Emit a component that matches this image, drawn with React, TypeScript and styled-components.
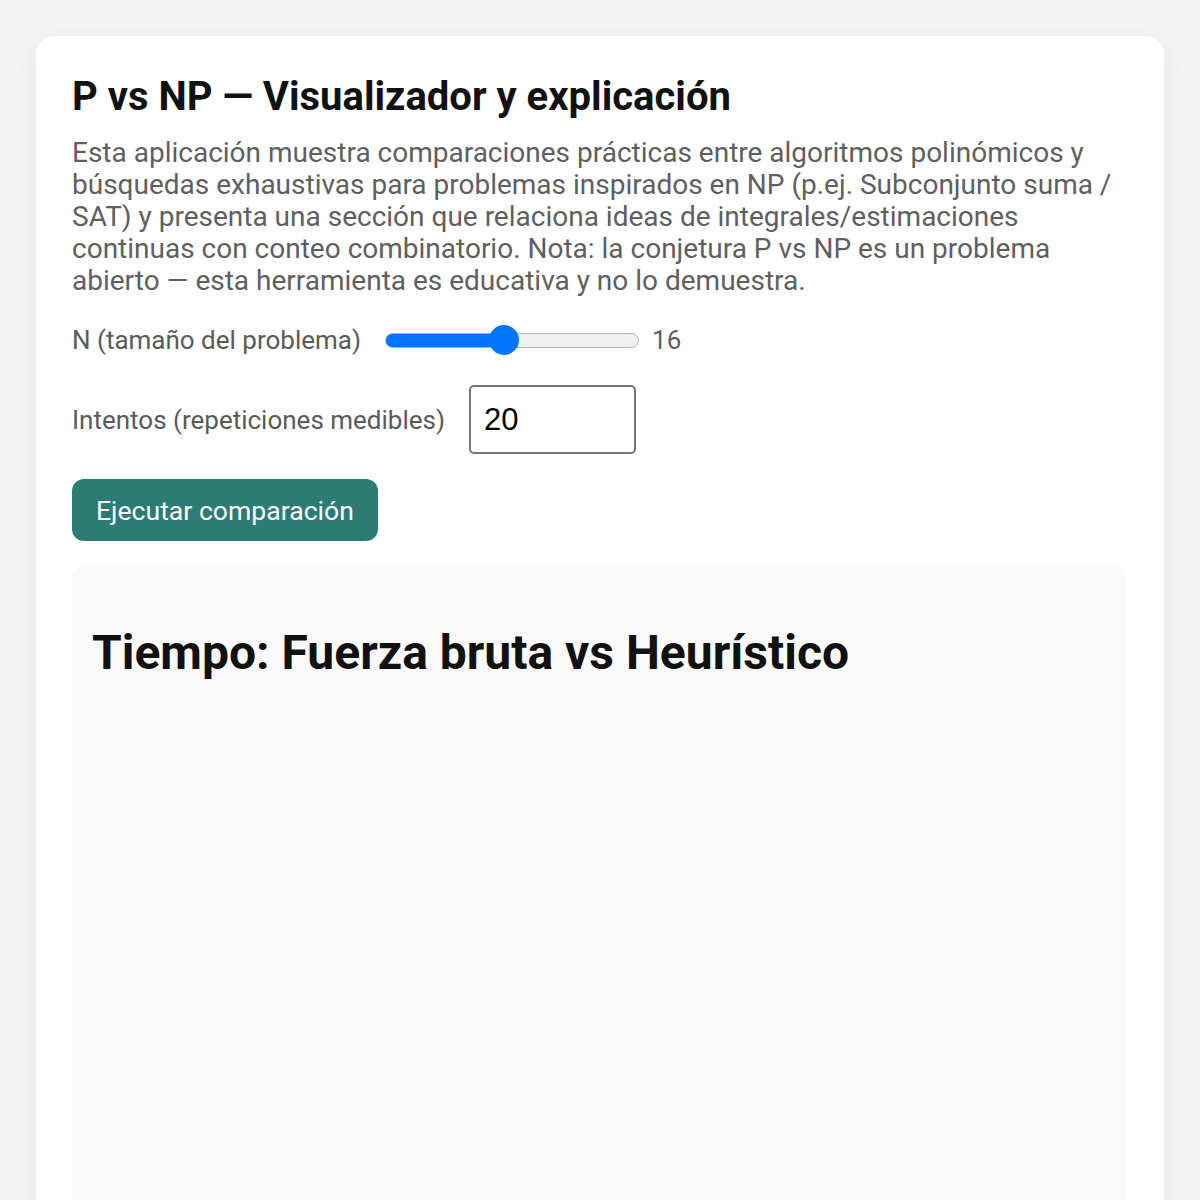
import React, { useState } from "react";
import styled, { createGlobalStyle } from "styled-components";

const Global = createGlobalStyle`
  html, body { margin: 0; padding: 0; background: #f4f4f4; }
  body { font-family: Roboto, "Noto Sans", "Liberation Sans", sans-serif; }
  * { box-sizing: border-box; }
`;

const Page = styled.div`
  padding: 36px 36px 0;
  min-height: 1200px;
`;

const Card = styled.main`
  background: #ffffff;
  border-radius: 18px;
  box-shadow: 0 4px 24px rgba(0, 0, 0, 0.06);
  padding: 37px 38px 40px 36px;
`;

const Title = styled.h1`
  margin: 0 0 17px;
  font-size: 40px;
  font-weight: 700;
  color: #111;
  line-height: 47px;
`;

const Lead = styled.p`
  margin: 0 0 28px;
  font-size: 28px;
  line-height: 32px;
  color: #5f5f5f;
`;

const Row = styled.div<{ $mb: number }>`
  display: flex;
  align-items: center;
  gap: 24px;
  margin-bottom: ${(p) => p.$mb}px;
`;

const Label = styled.label`
  font-size: 26px;
  line-height: 30px;
  color: #5a5a5a;
`;

const Value = styled.span`
  font-size: 26px;
  color: #5f5f5f;
  margin-left: -11px;
`;

const Range = styled.input`
  -webkit-appearance: none;
  appearance: none;
  width: 254px;
  height: 15px;
  margin: 0;
  border-radius: 8px;
  border: 1px solid #b4b4b4;
  outline: none;
  &::-webkit-slider-thumb {
    -webkit-appearance: none;
    width: 30px;
    height: 30px;
    border-radius: 50%;
    background: #0075ff;
    border: none;
    cursor: pointer;
  }
`;

const NumberBox = styled.input`
  width: 167px;
  height: 69px;
  border: 2px solid #767676;
  border-radius: 5px;
  padding: 0 13px;
  font-family: "Liberation Sans", Arial, sans-serif;
  font-size: 31px;
  color: #000;
  background: #fff;
  outline: none;
  &::-webkit-inner-spin-button { -webkit-appearance: none; }
`;

const RunButton = styled.button`
  height: 62px;
  padding: 0 24px;
  border: none;
  border-radius: 12px;
  background: #2c7b74;
  color: #fff;
  font-family: Roboto, "Noto Sans", sans-serif;
  font-size: 26.6px;
  cursor: pointer;
`;

const ChartPanel = styled.section`
  background: #fafafa;
  border-radius: 10px;
  box-shadow: 0 0 2px rgba(0, 0, 0, 0.04);
  padding: 20px 20px;
  height: 720px;
`;

const ChartTitle = styled.h2`
  margin: 38px 0 0;
  font-size: 48px;
  font-weight: 700;
  color: #111;
  line-height: 56px;
`;

export default function App() {
  const [n, setN] = useState(16);
  const [tries, setTries] = useState("20");
  const min = 4;
  const max = 30;
  const pct = ((n - min) / (max - min)) * 100;
  return (
    <>
      <Global />
      <Page>
        <Card>
          <Title>P vs NP — Visualizador y explicación</Title>
          <Lead>
            Esta aplicación muestra comparaciones prácticas entre algoritmos polinómicos y
            búsquedas exhaustivas para problemas inspirados en NP (p.ej. Subconjunto suma /
            SAT) y presenta una sección que relaciona ideas de integrales/estimaciones
            continuas con conteo combinatorio. Nota: la conjetura P vs NP es un problema
            abierto — esta herramienta es educativa y no lo demuestra.
          </Lead>
          <Row $mb={30}>
            <Label htmlFor="n">N (tamaño del problema)</Label>
            <Range
              id="n"
              type="range"
              min={min}
              max={max}
              value={n}
              onChange={(e) => setN(Number(e.target.value))}
              style={{
                background: `linear-gradient(to right, #0075ff 0%, #0075ff ${pct}%, #efefef ${pct}%, #efefef 100%)`,
              }}
            />
            <Value>{n}</Value>
          </Row>
          <Row $mb={25}>
            <Label htmlFor="t">Intentos (repeticiones medibles)</Label>
            <NumberBox id="t" type="number" value={tries} onChange={(e) => setTries(e.target.value)} />
          </Row>
          <Row $mb={26}>
            <RunButton>Ejecutar comparación</RunButton>
          </Row>
          <ChartPanel>
            <ChartTitle>Tiempo: Fuerza bruta vs Heurístico</ChartTitle>
          </ChartPanel>
        </Card>
      </Page>
    </>
  );
}
